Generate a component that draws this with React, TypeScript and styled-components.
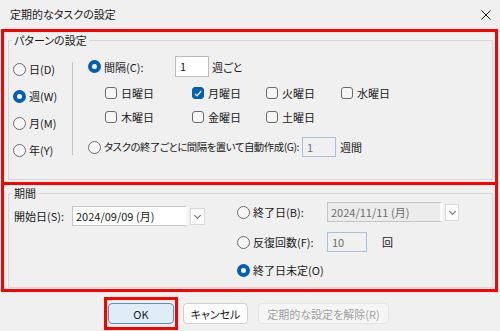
import React from "react";
import styled, { createGlobalStyle } from "styled-components";

const GlobalStyle = createGlobalStyle`
  html, body {
    margin: 0;
    padding: 0;
    background: #f0f0f0;
  }
  body {
    font-family: "Noto Sans CJK JP", "Noto Sans", sans-serif;
    font-size: 11px;
    color: #1a1a1a;
    font-feature-settings: "palt";
  }
  * {
    box-sizing: border-box;
  }
`;

const App: React.FC = () => {
  return (
    <>
      <GlobalStyle />
      <Window>
        <TitleBar>
          <TitleText>定期的なタスクの設定</TitleText>
          <CloseButton aria-label="閉じる">
            <svg width="10" height="10" viewBox="0 0 10 10">
              <path d="M0.5 0.5 L9.5 9.5 M9.5 0.5 L0.5 9.5" stroke="#1a1a1a" strokeWidth="1" />
            </svg>
          </CloseButton>
        </TitleBar>

        <Highlight $height={156}>
          <GroupBox $height={147}>
            <Legend>パターンの設定</Legend>
            <PatternBody>
              <FrequencyColumn>
                {frequencies.map((f) => (
                  <Choice key={f.label}>
                    <RadioMark $checked={f.checked} />
                    {f.label}
                  </Choice>
                ))}
              </FrequencyColumn>
              <Divider />
              <DetailColumn>
                <Row>
                  <Choice $width={87}>
                    <RadioMark $checked />
                    間隔(C):
                  </Choice>
                  <TextBox $width={34} $height={21}>1</TextBox>
                  <Suffix>週ごと</Suffix>
                </Row>
                <WeekdayGrid>
                  {weekdays.map((d) => (
                    <Choice key={d.label}>
                      <CheckMark $checked={d.checked}>
                        {d.checked && (
                          <svg width="8" height="7" viewBox="0 0 8 7">
                            <path d="M0.8 3.6 L3 5.8 L7.2 1" stroke="#fff" strokeWidth="1.2" fill="none" />
                          </svg>
                        )}
                      </CheckMark>
                      {d.label}
                    </Choice>
                  ))}
                </WeekdayGrid>
                <Row $gap={12}>
                  <Choice $tight>
                    <RadioMark />
                    <span>タスクの終了ごとに間隔を置いて自動作成(G):</span>
                  </Choice>
                  <TextBox $width={34} $height={20} $disabled $gap={3}>1</TextBox>
                  <Suffix $gap={4}>週間</Suffix>
                </Row>
              </DetailColumn>
            </PatternBody>
          </GroupBox>
        </Highlight>

        <Highlight $height={107} $joined>
          <GroupBox $height={102}>
            <Legend>期間</Legend>
            <PeriodBody>
              <StartBlock>
                <FieldLabel>開始日(S):</FieldLabel>
                <Combo>
                  <ComboInput $width={116}>2024/09/09 (月)</ComboInput>
                  <DropButton $width={15}>
                    <Chevron />
                  </DropButton>
                </Combo>
              </StartBlock>
              <EndColumn>
                <Row>
                  <Choice $width={90}>
                    <RadioMark />
                    終了日(B):
                  </Choice>
                  <Combo>
                    <ComboInput $width={116} $disabled>2024/11/11 (月)</ComboInput>
                    <DropButton $width={14}>
                      <Chevron />
                    </DropButton>
                  </Combo>
                </Row>
                <Row $gap={10}>
                  <Choice $width={90}>
                    <RadioMark />
                    反復回数(F):
                  </Choice>
                  <TextBox $width={40} $height={20} $disabled>10</TextBox>
                  <Suffix $gap={15}>回</Suffix>
                </Row>
                <Row $gap={8}>
                  <Choice>
                    <RadioMark $checked />
                    終了日未定(O)
                  </Choice>
                </Row>
              </EndColumn>
            </PeriodBody>
          </GroupBox>
        </Highlight>

        <ButtonBar>
          <FocusRing>
            <DialogButton $variant="primary" $width={66}>OK</DialogButton>
          </FocusRing>
          <DialogButton $width={65}>キャンセル</DialogButton>
          <DialogButton $variant="disabled" $width={131} $gap={10}>
            定期的な設定を解除(R)
          </DialogButton>
        </ButtonBar>
      </Window>
    </>
  );
};

const frequencies = [
  { label: "日(D)", checked: false },
  { label: "週(W)", checked: true },
  { label: "月(M)", checked: false },
  { label: "年(Y)", checked: false },
];

const weekdays = [
  { label: "日曜日", checked: false },
  { label: "月曜日", checked: true },
  { label: "火曜日", checked: false },
  { label: "水曜日", checked: false },
  { label: "木曜日", checked: false },
  { label: "金曜日", checked: false },
  { label: "土曜日", checked: false },
];

const Window = styled.div`
  width: 500px;
  height: 331px;
  background: #f0f0f0;
  display: flex;
  flex-direction: column;
  overflow: hidden;
`;

const TitleBar = styled.div`
  height: 29px;
  display: flex;
  align-items: center;
  justify-content: space-between;
  padding: 0 9px 1px 10px;
`;

const TitleText = styled.span`
  font-size: 11px;
  line-height: 16px;
`;

const CloseButton = styled.span`
  display: flex;
  width: 10px;
  height: 10px;
  margin-top: 1px;
`;

const Highlight = styled.section<{ $height: number; $joined?: boolean }>`
  width: 497px;
  height: ${(p) => p.$height}px;
  margin-left: 1px;
  border: 3px solid #ff0000;
  border-top-width: ${(p) => (p.$joined ? 0 : 3)}px;
  padding: 1px 2px 0 4px;
`;

const GroupBox = styled.fieldset<{ $height: number }>`
  margin: 0;
  padding: 0;
  height: ${(p) => p.$height}px;
  border: 1px solid #d6d6d6;
  min-inline-size: 0;
`;

const Legend = styled.legend`
  margin-left: 3px;
  padding: 0 2px;
  line-height: 14px;
  font-size: 11px;
`;

const PatternBody = styled.div`
  display: flex;
  align-items: flex-start;
`;

const FrequencyColumn = styled.div`
  width: 63px;
  display: flex;
  flex-direction: column;
  gap: 11px;
  padding: 14px 0 0 4px;
`;

const Divider = styled.div`
  width: 1px;
  height: 93px;
  margin-top: 15px;
  background: #c3c3c3;
`;

const DetailColumn = styled.div`
  display: flex;
  flex-direction: column;
  padding: 9px 0 0 15px;
`;

const Row = styled.div<{ $gap?: number }>`
  display: flex;
  align-items: center;
  margin-top: ${(p) => p.$gap ?? 0}px;
`;

const Choice = styled.label<{ $width?: number; $tight?: boolean }>`
  display: inline-flex;
  align-items: center;
  gap: 2px;
  height: 16px;
  line-height: 16px;
  white-space: nowrap;
  width: ${(p) => (p.$width ? `${p.$width}px` : "auto")};
  font-size: ${(p) => (p.$tight ? "10.4px" : "11px")};
  letter-spacing: ${(p) => (p.$tight ? "-0.45px" : "normal")};
  flex-shrink: 0;
`;

const RadioMark = styled.span<{ $checked?: boolean }>`
  width: 13px;
  height: 13px;
  border-radius: 50%;
  flex-shrink: 0;
  margin-right: 1px;
  background: ${(p) => (p.$checked ? "#ffffff" : "#f6f6f6")};
  border: ${(p) => (p.$checked ? "4px solid #005fb8" : "1px solid #6b6b6b")};
`;

const CheckMark = styled.span<{ $checked?: boolean }>`
  width: 12px;
  height: 12px;
  border-radius: 3px;
  flex-shrink: 0;
  margin-right: 2px;
  display: flex;
  align-items: center;
  justify-content: center;
  background: ${(p) => (p.$checked ? "#005fb8" : "#f6f6f6")};
  border: 1px solid ${(p) => (p.$checked ? "#005fb8" : "#6b6b6b")};
`;

const WeekdayGrid = styled.div`
  display: grid;
  grid-template-columns: 87px 74px 75px auto;
  row-gap: 8px;
  margin: 8px 0 0 17px;
`;

const TextBox = styled.div<{ $width: number; $height: number; $disabled?: boolean; $gap?: number }>`
  width: ${(p) => p.$width}px;
  height: ${(p) => p.$height}px;
  line-height: ${(p) => p.$height - 2}px;
  padding-left: 4px;
  margin-left: ${(p) => p.$gap ?? 0}px;
  flex-shrink: 0;
  background: ${(p) => (p.$disabled ? "#f0f0f0" : "#ffffff")};
  border: 1px solid ${(p) => (p.$disabled ? "#a9bfd9" : "#bcbcbc")};
  color: ${(p) => (p.$disabled ? "#6d6d6d" : "#1a1a1a")};
`;

const Suffix = styled.span<{ $gap?: number }>`
  margin-left: ${(p) => p.$gap ?? 3}px;
  white-space: nowrap;
`;

const PeriodBody = styled.div`
  display: flex;
  align-items: flex-start;
`;

const StartBlock = styled.div`
  width: 228px;
  display: flex;
  align-items: center;
  padding: 6px 0 0 5px;
`;

const FieldLabel = styled.span`
  width: 58px;
  flex-shrink: 0;
  white-space: nowrap;
`;

const Combo = styled.div`
  display: flex;
  align-items: center;
  gap: 2px;
`;

const ComboInput = styled.div<{ $width: number; $disabled?: boolean }>`
  width: ${(p) => p.$width}px;
  height: 20px;
  line-height: 18px;
  padding-left: 3px;
  background: ${(p) => (p.$disabled ? "#ececec" : "#ffffff")};
  border: 1px solid #c4c4c4;
  border-right: 3px solid #fafafa;
  color: ${(p) => (p.$disabled ? "#6d6d6d" : "#1a1a1a")};
  white-space: nowrap;
`;

const DropButton = styled.div<{ $width: number }>`
  width: ${(p) => p.$width}px;
  height: 17px;
  display: flex;
  align-items: center;
  justify-content: center;
  background: #fbfbfb;
  border: 1px solid #dadada;
`;

const Chevron = styled.span`
  width: 5px;
  height: 5px;
  border-right: 1px solid #6a6a6a;
  border-bottom: 1px solid #6a6a6a;
  transform: translateY(-1px) rotate(45deg);
`;

const EndColumn = styled.div`
  display: flex;
  flex-direction: column;
  padding-top: 2px;

  & > div {
    height: 20px;
  }
`;

const ButtonBar = styled.div`
  display: flex;
  align-items: center;
  padding: 5px 0 0 104px;
`;

const FocusRing = styled.div`
  border: 3px solid #ff0000;
  padding: 3px 1px;
  margin-right: 5px;
`;

const DialogButton = styled.div<{
  $variant?: "primary" | "default" | "disabled";
  $width: number;
  $gap?: number;
}>`
  width: ${(p) => p.$width}px;
  height: 21px;
  margin-left: ${(p) => p.$gap ?? 0}px;
  display: flex;
  align-items: center;
  justify-content: center;
  border-radius: 4px;
  white-space: nowrap;
  background: ${(p) =>
    p.$variant === "primary" ? "#e0ecf8" : p.$variant === "disabled" ? "#f5f5f5" : "#fdfdfd"};
  border: 1px solid
    ${(p) =>
      p.$variant === "primary" ? "#5b8fc9" : p.$variant === "disabled" ? "#e6e6e6" : "#d0d0d0"};
  color: ${(p) => (p.$variant === "disabled" ? "#a0a0a0" : "#1a1a1a")};
`;

export default App;
